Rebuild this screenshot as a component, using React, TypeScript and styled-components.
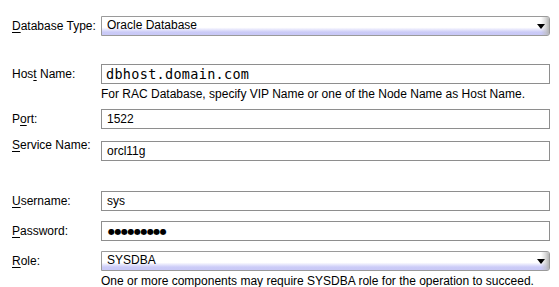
import React from 'react';
import styled, { createGlobalStyle } from 'styled-components';

const GlobalStyle = createGlobalStyle`
  html, body {
    margin: 0;
    padding: 0;
    background: #ffffff;
  }
  body {
    font-family: 'Liberation Sans', Arial, sans-serif;
    font-size: 12px;
    color: #000;
  }
`;

const Form = styled.div`
  width: 559px;
  height: 287px;
  padding-top: 16px;
  box-sizing: border-box;
  background: #fff;
`;

const Row = styled.div<{ $top?: number; $alignTop?: boolean }>`
  display: grid;
  grid-template-columns: 101px 449px;
  align-items: ${p => (p.$alignTop ? 'start' : 'center')};
  margin-top: ${p => p.$top ?? 0}px;
`;

const Label = styled.label<{ $offset?: number }>`
  padding-left: 12px;
  white-space: nowrap;
  margin-top: ${p => p.$offset ?? 0}px;
  u {
    text-decoration: underline;
    text-underline-offset: 2px;
  }
`;

const Field = styled.div<{ $mono?: boolean }>`
  height: 20px;
  box-sizing: border-box;
  border: 1px solid #8e8e8e;
  background: #fff;
  display: flex;
  align-items: center;
  padding-left: ${p => (p.$mono ? 4 : 5)}px;
  font-family: ${p =>
    p.$mono ? "'DejaVu Sans Mono', 'Liberation Mono', monospace" : "'Liberation Sans', Arial, sans-serif"};
  font-size: ${p => (p.$mono ? 13.5 : 12)}px;
  letter-spacing: ${p => (p.$mono ? '0.3px' : '0')};
`;

const Dots = styled.span`
  font-family: 'DejaVu Sans', sans-serif;
  font-size: 8px;
  letter-spacing: -0.5px;
  padding-left: 1px;
`;

const Combo = styled.div`
  position: relative;
  height: 20px;
  box-sizing: border-box;
  border: 1px solid #9a9a9a;
  border-radius: 0 3px 3px 0;
  background: linear-gradient(to bottom, #ffffff 0%, #ffffff 58%, #e2e2fb 72%, #cbcbf7 84%, #c8c8f6 100%);
  display: flex;
  align-items: center;
  padding-left: 5px;
  padding-bottom: 2px;
  overflow: hidden;

  &::after {
    content: '';
    position: absolute;
    top: 0;
    right: 0;
    bottom: 0;
    width: 8px;
    background: linear-gradient(to right, rgba(255, 255, 255, 0) 0%, rgba(190, 190, 190, 0.6) 60%, #b4b4b4 100%);
  }
`;

const Arrow = styled.span`
  position: absolute;
  right: 4px;
  top: 7px;
  width: 0;
  height: 0;
  border-left: 4px solid transparent;
  border-right: 4px solid transparent;
  border-top: 5px solid #000;
  z-index: 1;
`;

const Hint = styled.div`
  grid-column: 2;
  padding-top: 3px;
  white-space: nowrap;
`;

const App = () => {
  return (
    <>
      <GlobalStyle />
      <Form>
        <Row>
          <Label>
            <u>D</u>atabase Type:
          </Label>
          <Combo>
            Oracle Database
            <Arrow />
          </Combo>
        </Row>

        <Row $top={28}>
          <Label>
            Hos<u>t</u> Name:
          </Label>
          <Field $mono>dbhost.domain.com</Field>
          <Hint>For RAC Database, specify VIP Name or one of the Node Name as Host Name.</Hint>
        </Row>

        <Row $top={8}>
          <Label>
            P<u>o</u>rt:
          </Label>
          <Field>1522</Field>
        </Row>

        <Row $top={12} $alignTop>
          <Label $offset={-3}>
            <u>S</u>ervice Name:
          </Label>
          <Field>orcl11g</Field>
        </Row>

        <Row $top={30}>
          <Label>
            <u>U</u>sername:
          </Label>
          <Field>sys</Field>
        </Row>

        <Row $top={10}>
          <Label>
            <u>P</u>assword:
          </Label>
          <Field>
            <Dots>●●●●●●●●●</Dots>
          </Field>
        </Row>

        <Row $top={10}>
          <Label>
            <u>R</u>ole:
          </Label>
          <Combo>
            SYSDBA
            <Arrow />
          </Combo>
          <Hint>One or more components may require SYSDBA role for the operation to succeed.</Hint>
        </Row>
      </Form>
    </>
  );
};

export default App;
